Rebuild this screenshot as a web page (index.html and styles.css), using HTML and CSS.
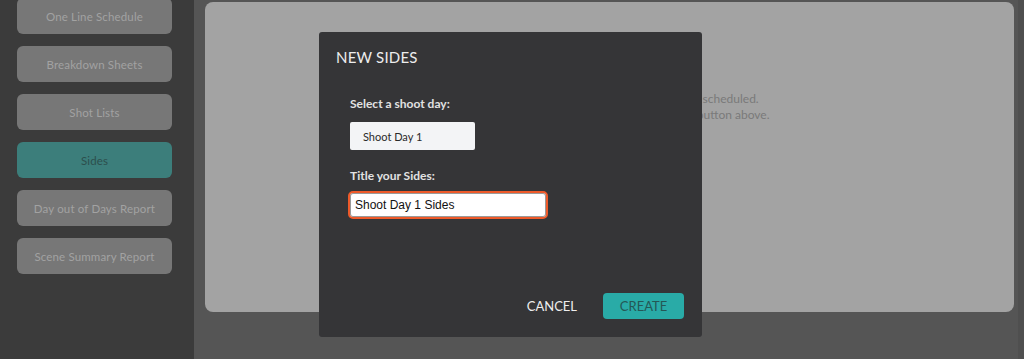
FILE: index.html
```html
<!DOCTYPE html>
<html>
<head>
<meta charset="utf-8">
<link rel="stylesheet" href="styles.css">
</head>
<body>
<div class="app">
  <nav class="sidebar">
    <div class="nav-btn">One Line Schedule</div>
    <div class="nav-btn">Breakdown Sheets</div>
    <div class="nav-btn">Shot Lists</div>
    <div class="nav-btn active">Sides</div>
    <div class="nav-btn">Day out of Days Report</div>
    <div class="nav-btn">Scene Summary Report</div>
  </nav>
  <main class="main">
    <section class="panel">
      <p class="empty">There are not any shoot days that have been scheduled.<br>Add a new shoot day with the Add Shoot Day button above.</p>
    </section>
    <div class="scroll-strip"></div>
  </main>
</div>

<div class="modal">
  <h2 class="modal-title">NEW SIDES</h2>
  <div class="modal-body">
    <label class="field-label">Select a shoot day:</label>
    <div class="select">Shoot Day 1</div>
    <label class="field-label second">Title your Sides:</label>
    <div class="input">Shoot Day 1 Sides</div>
  </div>
  <div class="modal-actions">
    <span class="btn-cancel">CANCEL</span>
    <span class="btn-create">CREATE</span>
  </div>
</div>
</body>
</html>
```

FILE: styles.css
```css
* { box-sizing: border-box; }
html, body { margin: 0; padding: 0; }
body {
  width: 1024px;
  height: 359px;
  overflow: hidden;
  font-family: Lato, "Open Sans", sans-serif;
  background: #555555;
  position: relative;
}
.app {
  display: flex;
  height: 359px;
}
.sidebar {
  width: 194px;
  flex: none;
  background: #3b3b3b;
  display: flex;
  flex-direction: column;
  gap: 12px;
  padding: 0 22px 0 17px;
  margin-top: -2px;
}
.nav-btn {
  height: 36px;
  background: #777777;
  border-radius: 6px;
  color: #a2a2a2;
  font-size: 11.5px;
  letter-spacing: 0.15px;
  display: flex;
  align-items: center;
  justify-content: center;
}
.nav-btn.active {
  background: #3c7e7b;
  color: #2c4f4d;
}
.main {
  flex: 1;
  display: flex;
  padding: 2px 0 0 11px;
  background: #555555;
}
.panel {
  width: 809px;
  height: 310px;
  background: #a3a3a3;
  border-radius: 8px;
  text-align: center;
  position: relative;
}
.scroll-strip {
  width: 6px;
  margin-left: 4px;
  height: 359px;
  margin-top: -2px;
  background: #4f4f4f;
}
.empty {
  margin: 89px 0 0;
  color: #7a7a7a;
  font-size: 12px;
  line-height: 16px;
  padding-left: 6px;
}
.modal {
  position: absolute;
  left: 319px;
  top: 32px;
  width: 383px;
  height: 305px;
  background: #353537;
  border-radius: 3px;
  display: flex;
  flex-direction: column;
}
.modal-title {
  margin: 16px 0 0 17px;
  font-size: 15px;
  font-weight: 400;
  color: #ededed;
  letter-spacing: 0.2px;
  line-height: 18px;
}
.modal-body {
  padding: 30px 0 0 31px;
  display: flex;
  flex-direction: column;
  align-items: flex-start;
}
.field-label {
  font-size: 12px;
  font-weight: 700;
  color: #e2e2e2;
  line-height: 15px;
}
.field-label.second { margin-top: 18px; }
.select {
  margin-top: 11px;
  width: 125px;
  height: 28px;
  background: #f3f4f6;
  border-radius: 2px;
  font-size: 11px;
  color: #2a2a2a;
  display: flex;
  align-items: center;
  padding-left: 13px;
}
.input {
  margin-top: 8px;
  margin-left: -2px;
  width: 200px;
  height: 28px;
  background: #ffffff;
  border: 2px solid #ee5a2a;
  border-radius: 5px;
  box-shadow: inset 0 0 0 1px #9a9a9a;
  font-family: "Liberation Sans", Arial, sans-serif;
  font-size: 12px;
  color: #111;
  display: flex;
  align-items: center;
  padding-left: 5px;
}
.modal-actions {
  margin-top: auto;
  margin-bottom: 18px;
  display: flex;
  justify-content: flex-end;
  align-items: center;
  gap: 26px;
  padding-right: 18px;
}
.btn-cancel {
  font-size: 13px;
  color: #eeeeee;
}
.btn-create {
  width: 81px;
  height: 26px;
  background: #29aba7;
  border-radius: 4px;
  color: #245856;
  font-size: 13px;
  display: flex;
  align-items: center;
  justify-content: center;
}
```
